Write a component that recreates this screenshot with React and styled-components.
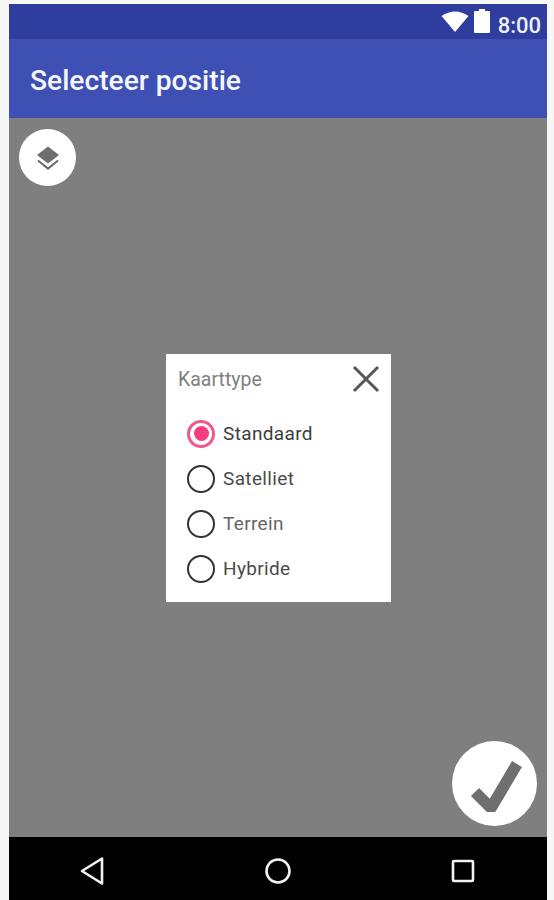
import React from "react";
import styled, { createGlobalStyle } from "styled-components";

const Global = createGlobalStyle`
  html, body { margin: 0; padding: 0; background: #f7f7f8; }
  body { font-family: Roboto, "Liberation Sans", sans-serif; }
`;

const Phone = styled.div`
  width: 538px;
  height: 896px;
  margin: 4px 0 0 9px;
  display: flex;
  flex-direction: column;
  overflow: hidden;
`;

const StatusBar = styled.div`
  height: 35px;
  flex: none;
  background: #2f3e9e;
  display: flex;
  align-items: center;
  justify-content: flex-end;
  padding-right: 6px;
  color: #fff;
`;

const StatusIcon = styled.svg`
  display: block;
  flex: none;
  margin-right: ${(p) => p.$gap || 0}px;
  position: relative;
  top: -1px;
`;

const Clock = styled.span`
  font-size: 22px;
  font-weight: 500;
  line-height: 24px;
  margin-top: 8px;
  color: #eef0f8;
`;

const AppBar = styled.header`
  height: 79px;
  flex: none;
  background: #3e50b4;
  display: flex;
  align-items: center;
  padding-left: 21px;
  box-sizing: border-box;
`;

const Title = styled.h1`
  margin: 0;
  font-size: 28.2px;
  font-weight: 500;
  color: #f5f6fc;
  line-height: 30px;
  position: relative;
  top: 2px;
`;

const MapArea = styled.main`
  position: relative;
  flex: 1;
  background: #7f7f7f;
  display: flex;
  align-items: flex-start;
  justify-content: flex-start;
  padding: 236px 0 0 157px;
  box-sizing: border-box;
`;

const RoundButton = styled.button`
  position: absolute;
  border: 0;
  padding: 0;
  border-radius: 50%;
  background: #fff;
  display: flex;
  align-items: center;
  justify-content: center;
  left: ${(p) => p.$left}px;
  top: ${(p) => p.$top}px;
  width: ${(p) => p.$size}px;
  height: ${(p) => p.$size}px;
`;

const Dialog = styled.section`
  width: 225px;
  height: 248px;
  background: #fff;
  box-sizing: border-box;
  padding: 0 10px 0 12px;
  display: flex;
  flex-direction: column;
`;

const DialogHeader = styled.div`
  height: 50px;
  display: flex;
  align-items: center;
  justify-content: space-between;
`;

const DialogTitle = styled.h2`
  margin: 0;
  font-size: 19.5px;
  font-weight: 400;
  color: #808080;
`;

const Options = styled.div`
  display: flex;
  flex-direction: column;
  padding: 7px 0 0 9px;
`;

const Option = styled.label`
  height: 45px;
  display: flex;
  align-items: center;
  gap: 8px;
  font-size: 19px;
  letter-spacing: 0.35px;
  color: ${(p) => p.$color || "#444"};
`;

const Radio = styled.span`
  width: 28px;
  height: 28px;
  box-sizing: border-box;
  border-radius: 50%;
  border: ${(p) => (p.$checked ? "3px solid #ee5a8c" : "2.5px solid #333")};
  display: flex;
  align-items: center;
  justify-content: center;
  flex: none;
  &::after {
    content: "";
    display: ${(p) => (p.$checked ? "block" : "none")};
    width: 15px;
    height: 15px;
    border-radius: 50%;
    background: #f33f80;
  }
`;

const NavBar = styled.nav`
  height: 63px;
  flex: none;
  background: #000;
  display: grid;
  grid-template-columns: 1fr 1fr 1fr;
  align-items: center;
  justify-items: center;
`;

const NavIcon = styled.svg`
  display: block;
  position: relative;
  top: 2px;
  left: ${(p) => p.$shift || 0}px;
`;

const OPTIONS = [
  { label: "Standaard", checked: true, color: "#3c3c3c" },
  { label: "Satelliet", color: "#4a4a4a" },
  { label: "Terrein", color: "#666" },
  { label: "Hybride", color: "#4a4a4a" },
];

export default function App() {
  return (
    <>
      <Global />
      <Phone>
        <StatusBar>
          <StatusIcon $gap={5} width="28" height="24" viewBox="0 0 28 24">
            <path d="M0.5 7 Q14 -2 27.5 7 L14 23 Z" fill="#fff" />
          </StatusIcon>
          <StatusIcon $gap={8} width="16" height="24" viewBox="0 0 16 24">
            <path d="M5 0h6v2h4a1 1 0 0 1 1 1v20a1 1 0 0 1-1 1H1a1 1 0 0 1-1-1V3a1 1 0 0 1 1-1h4z" fill="#fff" />
          </StatusIcon>
          <Clock>8:00</Clock>
        </StatusBar>
        <AppBar>
          <Title>Selecteer positie</Title>
        </AppBar>
        <MapArea>
          <RoundButton $left={10} $top={11} $size={57} aria-label="Kaartlagen">
            <svg width="28" height="28" viewBox="0 0 28 28">
              <path d="M14 2.5 L25 11 L14 19.5 L3 11 Z" fill="#6e6e6e" />
              <path d="M4 16.5 L14 24.5 L24 16.5" fill="none" stroke="#6e6e6e" strokeWidth="2.2" />
            </svg>
          </RoundButton>
          <Dialog>
            <DialogHeader>
              <DialogTitle>Kaarttype</DialogTitle>
              <svg width="30" height="30" viewBox="0 0 30 30">
                <path d="M3 3 L27 27 M27 3 L3 27" stroke="#555" strokeWidth="3" />
              </svg>
            </DialogHeader>
            <Options>
              {OPTIONS.map((o) => (
                <Option key={o.label} $color={o.color}>
                  <Radio $checked={o.checked} />
                  {o.label}
                </Option>
              ))}
            </Options>
          </Dialog>
          <RoundButton $left={443} $top={623} $size={85} aria-label="Bevestigen">
            <svg width="56" height="56" viewBox="0 0 56 56">
              <path d="M8 36 L24 52 L50 8" fill="none" stroke="#6f6f6f" strokeWidth="11.5" strokeLinejoin="round" />
            </svg>
          </RoundButton>
        </MapArea>
        <NavBar>
          <NavIcon $shift={-7} width="26" height="30" viewBox="0 0 26 30">
            <path d="M23 2.5 L3 15 L23 27.5 Z" fill="none" stroke="#f2f2f2" strokeWidth="2.6" strokeLinejoin="round" />
          </NavIcon>
          <NavIcon width="28" height="28" viewBox="0 0 28 28">
            <circle cx="14" cy="14" r="11.5" fill="none" stroke="#f2f2f2" strokeWidth="2.6" />
          </NavIcon>
          <NavIcon $shift={6} width="24" height="24" viewBox="0 0 24 24">
            <rect x="2" y="2" width="20" height="20" rx="1" fill="none" stroke="#f2f2f2" strokeWidth="2.6" />
          </NavIcon>
        </NavBar>
      </Phone>
    </>
  );
}
